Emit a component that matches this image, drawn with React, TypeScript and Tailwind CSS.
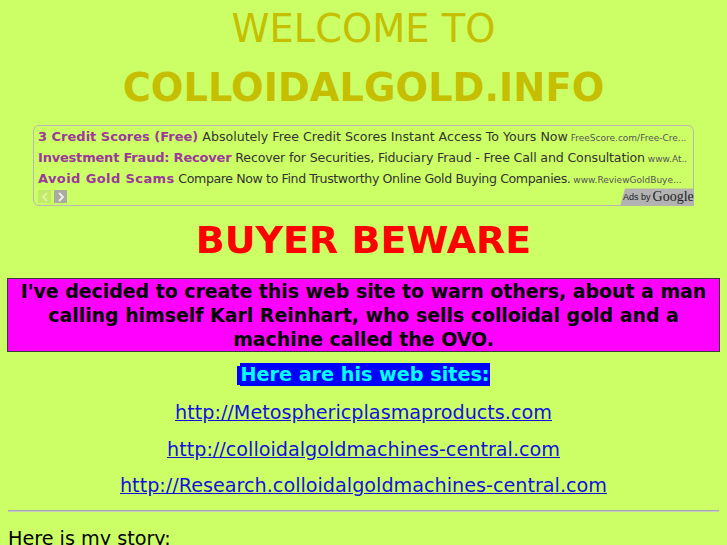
import React from "react";

function AdLine({
  title,
  desc,
  url,
  titleCls,
  descCls,
}: {
  title: string;
  desc: string;
  url: string;
  titleCls: string;
  descCls: string;
}) {
  return (
    <div className="whitespace-nowrap overflow-hidden h-[21px] leading-[21px] text-[13px]">
      <span className={"font-bold text-[#9a3a9a] " + titleCls}>{title}</span>
      <span className={"text-[12.6px] text-[#333333] " + descCls}> {desc}</span>
      <span className="text-[9px] text-[#555555]"> {url}</span>
    </div>
  );
}

export default function App() {
  return (
    <div className="min-h-screen bg-[#ccff66] font-['DejaVu_Sans',sans-serif] text-black">
      <div className="px-2 pb-4">
        <div className="pt-[7px] text-center text-[38.4px] leading-[1.164] text-[#c6be00]">WELCOME TO</div>
        <div className="mt-[14px] text-center text-[38.4px] leading-[1.164] font-bold text-[#c6be00]">
          COLLOIDALGOLD.INFO
        </div>

        <div className="relative mt-[15px] mx-[25px]">
          <div className="h-[81px] border border-[#b8b8b8] rounded-[6px] overflow-hidden pl-[4px] pr-[6px]">
            <AdLine
              title="3 Credit Scores (Free)"
              desc="Absolutely Free Credit Scores Instant Access To Yours Now"
              url="FreeScore.com/Free-Cre..."
              titleCls="tracking-[0px]"
              descCls="tracking-[0px]"
            />
            <AdLine
              title="Investment Fraud: Recover"
              desc="Recover for Securities, Fiduciary Fraud - Free Call and Consultation"
              url="www.At..."
              titleCls="tracking-[-0.2px]"
              descCls="tracking-[-0.15px]"
            />
            <AdLine
              title="Avoid Gold Scams"
              desc="Compare Now to Find Trustworthy Online Gold Buying Companies."
              url="www.ReviewGoldBuye..."
              titleCls="tracking-[0.4px]"
              descCls="tracking-[-0.4px]"
            />
            <div className="flex gap-[3px] pt-[1px] pl-0">
              <div className="w-[13px] h-[13px] bg-[#c2ea6a] flex items-center justify-center">
                <svg width="8" height="10" viewBox="0 0 8 10">
                  <path d="M6 1 L2 5 L6 9" stroke="#daf59a" strokeWidth="2" fill="none" />
                </svg>
              </div>
              <div className="w-[13px] h-[13px] bg-[#a9ab9f] flex items-center justify-center">
                <svg width="8" height="10" viewBox="0 0 8 10">
                  <path d="M2 1 L6 5 L2 9" stroke="#eeeeee" strokeWidth="2" fill="none" />
                </svg>
              </div>
            </div>
          </div>
          <div className="absolute right-0 bottom-0 w-[74px] h-[18px] bg-[#b2b2b2] rounded-tl-[4px] [clip-path:polygon(5px_0,100%_0,100%_100%,0_100%)] flex items-center pl-[3px] gap-[2px] text-[#222]">
            <span className="font-['Liberation_Sans',sans-serif] text-[9px] leading-none">Ads by</span>
            <span className="font-['Liberation_Serif',serif] text-[14px] leading-none">Google</span>
          </div>
        </div>

        <div className="mt-[13px] text-center text-[38px] leading-[1.13] font-bold text-[#ff0000]">BUYER BEWARE</div>

        <div className="mt-[16px] mx-[-1px] border border-[#3a3a3a] bg-[#ff00ff] text-center font-bold text-[18.9px] leading-[24px]">
          I've decided to create this web site to warn others, about a man calling himself Karl Reinhart, who sells
          colloidal gold and a machine called the OVO.
        </div>

        <div className="mt-[12px] text-center text-[19.2px] leading-[1.164]">
          <span className="inline-block w-[3px] h-[19px] bg-[#0000ff] align-[-4px]"></span>
          <span className="bg-[#0000ff] text-[#00ffff] font-bold">Here are his web sites:</span>
        </div>

        <div className="mt-[15.65px] text-center text-[19.2px] leading-[1.164]">
          <a href="#" className="text-[#1212dd] underline">http://Metosphericplasmaproducts.com</a>
        </div>
        <div className="mt-[14px] text-center text-[19.2px] leading-[1.164]">
          <a href="#" className="text-[#1212dd] underline">http://colloidalgoldmachines-central.com</a>
        </div>
        <div className="mt-[14px] text-center text-[19.2px] leading-[1.164]">
          <a href="#" className="text-[#1212dd] underline">http://Research.colloidalgoldmachines-central.com</a>
        </div>

        <div className="mt-[12.5px] h-[2px] border-t border-[#a8a8a8] border-b border-b-[#c8c8c8]"></div>

        <div className="mt-[16px] text-[19.2px] leading-[1.164]">Here is my story:</div>
      </div>
    </div>
  );
}
